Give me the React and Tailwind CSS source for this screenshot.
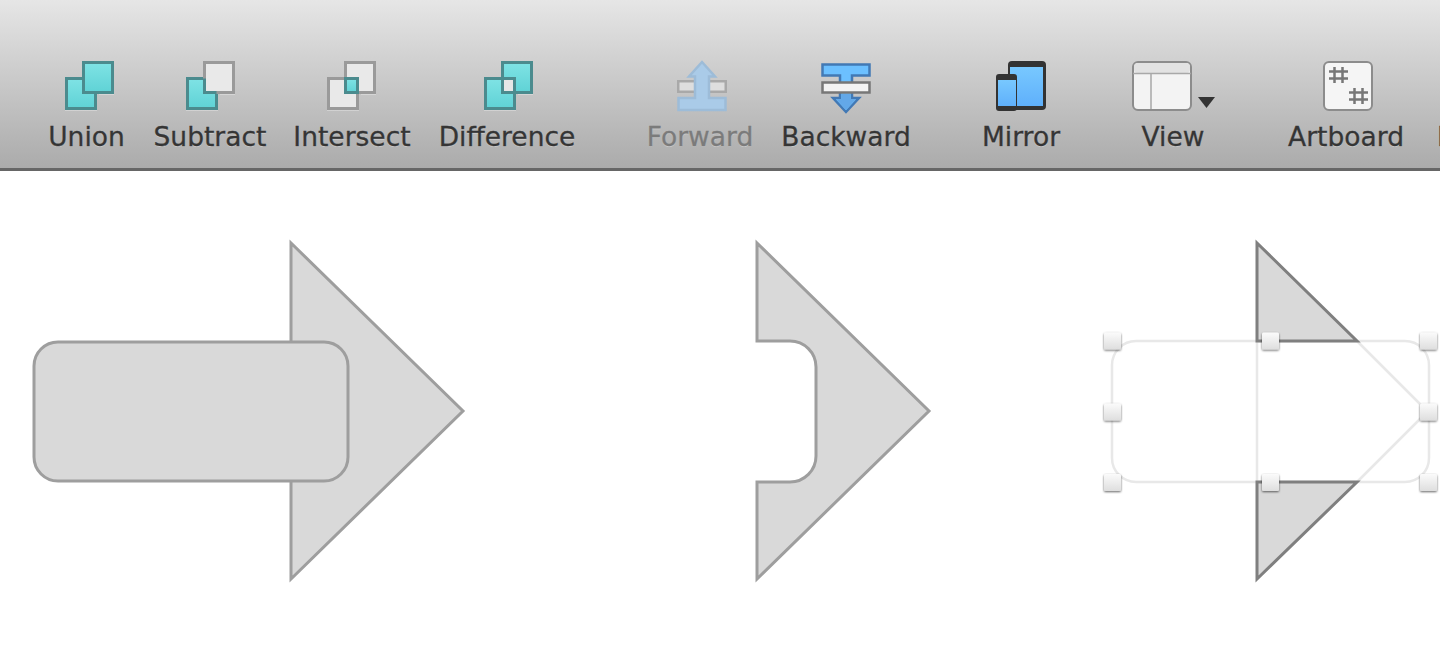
import React from 'react';

const TEAL_STROKE = '#4b8b8e';
const GRAY_STROKE = '#9a9a9a';

// the four boolean icons share the same two squares
const BoolIcon = ({ kind }) => {
    const id = `teal-${kind}`;
    const teal = `url(#${id})`;
    const light = '#e9e9e9';
    const back = { x: 3.5, y: 18.5, width: 29, height: 30 };
    const front = { x: 20.5, y: 2.5, width: 29, height: 30 };
    const overlap = { x: 20.5, y: 18.5, width: 12, height: 14 };
    const backOn = kind === 'union' || kind === 'subtract' || kind === 'difference';
    const frontOn = kind === 'union' || kind === 'difference';

    return (
        <svg width="52" height="52" viewBox="0 0 52 52" fill="none">
            <defs>
                <linearGradient id={id} x1="0" y1="0" x2="0" y2="1">
                    <stop offset="0" stopColor="#7fe3e5" />
                    <stop offset="1" stopColor="#5fd2d5" />
                </linearGradient>
            </defs>
            <path d="M2 50.5H34M36 34.5H51" stroke="#fff" strokeOpacity="0.3" strokeWidth="1" />
            <rect {...back} fill={backOn ? teal : light} stroke={backOn ? TEAL_STROKE : GRAY_STROKE} strokeWidth="3" />
            <rect {...front} fill={frontOn ? teal : light} stroke={frontOn ? TEAL_STROKE : GRAY_STROKE} strokeWidth="3" />
            {kind === 'subtract' && <path d="M20.5 18.5V32.5H32.5" stroke={TEAL_STROKE} strokeWidth="3" />}
            {kind === 'intersect' && <rect {...overlap} fill={teal} stroke={TEAL_STROKE} strokeWidth="3" />}
            {kind === 'difference' && <rect {...overlap} fill="#e6e6e6" stroke={TEAL_STROKE} strokeWidth="3" />}
        </svg>
    );
};

const ForwardIcon = () => (
    <svg width="52" height="52" viewBox="676 60 52 52" fill="none">
        <rect x="678.25" y="81.25" width="47.5" height="10.5" fill="#dedede" stroke="#a9a9a9" strokeWidth="2.5" />
        <path d="M702 62L715 76.5H709V98H725.5V110H678.5V98H695V76.5H689Z" fill="#aacbe8" stroke="#9dbcd8" strokeWidth="2.5" />
    </svg>
);

const BackwardIcon = () => (
    <svg width="52" height="56" viewBox="820 60 52 56" fill="none">
        <path d="M822.5 64.5H869.5V75.5H852V98H859L846 112L833 98H840V75.5H822.5Z" fill="#6cc0ff" stroke="#4279b5" strokeWidth="2.5" />
        <path d="M841.5 94H850.5V99H856L846 110L836 99H841.5Z" fill="#63a8e8" />
        <rect x="822.5" y="82.5" width="47" height="10" fill="#f3f3f3" stroke="#777" strokeWidth="2.5" />
    </svg>
);

const MirrorIcon = () => (
    <svg width="52" height="52" viewBox="995 60 52 52">
        <defs>
            <linearGradient id="mirror-screen" x1="0" y1="0" x2="0" y2="1">
                <stop offset="0" stopColor="#78c8ff" />
                <stop offset="1" stopColor="#5fb0fb" />
            </linearGradient>
        </defs>
        <rect x="1008" y="61" width="38" height="49" rx="4" fill="#333" />
        <rect x="1010" y="67" width="33" height="39" fill="url(#mirror-screen)" />
        <rect x="996" y="74" width="21" height="37" rx="3" fill="#333" />
        <rect x="998" y="80" width="18" height="26" fill="url(#mirror-screen)" />
    </svg>
);

const ViewIcon = () => (
    <svg width="85" height="52" viewBox="1131 60 85 52" fill="none">
        <rect x="1133" y="62" width="58" height="48" rx="5" fill="#f3f3f3" stroke="#8c8c8c" strokeWidth="2" />
        <rect x="1134" y="63" width="56" height="10" rx="4" fill="#e2e2e2" />
        <path d="M1133 73.5H1191M1151 73V109" stroke="#a8a8a8" strokeWidth="1.5" />
        <path d="M1198 97H1215L1206.5 108Z" fill="#333" />
    </svg>
);

const ArtboardIcon = () => (
    <svg width="52" height="52" viewBox="1322 60 52 52" fill="none">
        <rect x="1324" y="62" width="48" height="48" rx="5" fill="#f5f5f5" stroke="#8c8c8c" strokeWidth="2" />
        <path d="M1329 71.5H1348M1329 78.5H1348M1334.5 67V83M1342.5 67V83M1349 92.5H1368M1349 99.5H1368M1354.5 88V104M1362.5 88V104" stroke="#777" strokeWidth="2.5" />
    </svg>
);

const ToolItem = ({ label, icon, disabled, className = '', iconClass = '' }) => (
    <div className={`flex flex-col items-center shrink-0 ${className}`}>
        <div className={`h-[52px] ${iconClass}`}>{icon}</div>
        <span className={`mt-[9px] text-[26.5px] leading-8 whitespace-nowrap [-webkit-text-stroke:0.3px] [text-shadow:0_1px_0_rgba(255,255,255,0.3)] ${disabled ? 'text-[#7b7b7b]' : 'text-[#353535]'}`}>
            {label}
        </span>
    </div>
);

const Toolbar = () => (
    <div className="h-[171px] shrink-0 border-b-[3px] border-[#666666] bg-gradient-to-b from-[#e6e6e6] to-[#ababab] pt-[60px] pl-[48px] flex gap-7 overflow-hidden font-['DejaVu_Sans',sans-serif]">
        <ToolItem label="Union" icon={<BoolIcon kind="union" />} className="w-[77px]" iconClass="ml-1" />
        <ToolItem label="Subtract" icon={<BoolIcon kind="subtract" />} className="w-[112px] ml-px" />
        <ToolItem label="Intersect" icon={<BoolIcon kind="intersect" />} className="w-[116px]" iconClass="-ml-0.5" />
        <ToolItem label="Difference" icon={<BoolIcon kind="difference" />} className="w-[136px] ml-px" iconClass="ml-px" />
        <ToolItem label="Forward" icon={<ForwardIcon />} disabled className="w-[108px] ml-[43px]" iconClass="ml-1" />
        <ToolItem label="Backward" icon={<BackwardIcon />} className="w-[126px] ml-px" />
        <ToolItem label="Mirror" icon={<MirrorIcon />} className="w-[82px] ml-[43px]" />
        <ToolItem label="View" icon={<ViewIcon />} className="w-[62px] ml-[52px]" />
        <ToolItem label="Artboard" icon={<ArtboardIcon />} className="w-[118px] ml-[55px]" iconClass="ml-1" />
        <ToolItem label="Export" icon={<div className="w-[52px]" />} className="ml-1" />
    </div>
);

const SHAPE_FILL = '#d9d9d9';
const SHAPE_STROKE = '#9e9e9e';

const Handle = ({ x, y }) => (
    <rect x={x - 8.5} y={y - 8.5} width="17" height="17" rx="1.5" fill="url(#handle-fill)" filter="url(#handle-shadow)" />
);

const Canvas = () => (
    <div className="flex-1 bg-white flex pt-[67px] pl-[30px] overflow-hidden">
        <svg width="438" height="346" viewBox="30 238 438 346" className="shrink-0" fill="none">
            <path d="M291 243L463 411L291 579Z" fill={SHAPE_FILL} stroke={SHAPE_STROKE} strokeWidth="3" />
            <rect x="34" y="342" width="314" height="139" rx="24" fill={SHAPE_FILL} stroke={SHAPE_STROKE} strokeWidth="3" />
        </svg>
        <svg width="181" height="346" viewBox="753 238 181 346" className="shrink-0 ml-[285px]" fill="none">
            <path d="M757 243L929 411L757 579V482H790A26 26 0 0 0 816 456V367A26 26 0 0 0 790 341H757Z" fill={SHAPE_FILL} stroke={SHAPE_STROKE} strokeWidth="3" />
        </svg>
        <svg width="340" height="346" viewBox="1100 238 340 346" className="shrink-0 ml-[166px]" fill="none">
            <defs>
                <linearGradient id="handle-fill" x1="0" y1="0" x2="0" y2="1">
                    <stop offset="0" stopColor="#fbfbfb" />
                    <stop offset="1" stopColor="#dedede" />
                </linearGradient>
                <filter id="handle-shadow" x="-30%" y="-30%" width="160%" height="170%">
                    <feDropShadow dx="0" dy="1" stdDeviation="1.2" floodColor="#000" floodOpacity="0.6" />
                </filter>
            </defs>
            <rect x="1112" y="341" width="317" height="141" rx="24" stroke="#e8e8e8" strokeWidth="2.5" />
            <path d="M1257 341V482M1357 341L1425 409M1357 482L1425 414" stroke="#e8e8e8" strokeWidth="2.5" />
            <path d="M1257 243L1357 341H1257Z" fill={SHAPE_FILL} stroke="#7f7f7f" strokeWidth="3" />
            <path d="M1257 579L1357 482H1257Z" fill={SHAPE_FILL} stroke="#7f7f7f" strokeWidth="3" />
            {[1112.5, 1270.5, 1428.5].map((x) =>
                [341, 482.5].map((y) => <Handle key={`${x}-${y}`} x={x} y={y} />)
            )}
            <Handle x={1112.5} y={412} />
            <Handle x={1428.5} y={412} />
        </svg>
    </div>
);

const App = () => (
    <div className="w-[1440px] h-[663px] flex flex-col overflow-hidden bg-white">
        <Toolbar />
        <Canvas />
    </div>
);

export default App;
